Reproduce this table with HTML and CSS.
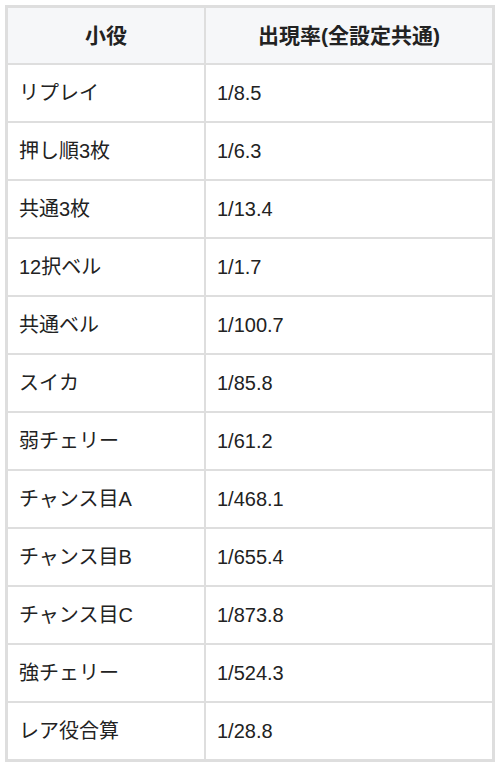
FILE: index.html
```html
<!DOCTYPE html>
<html lang="ja">
<head>
<meta charset="utf-8">
<link rel="stylesheet" href="styles.css">
</head>
<body>
<table class="rates">
  <thead>
    <tr><th class="col-name">小役</th><th class="col-rate">出現率(全設定共通)</th></tr>
  </thead>
  <tbody>
    <tr><td>リプレイ</td><td>1/8.5</td></tr>
    <tr><td>押し順3枚</td><td>1/6.3</td></tr>
    <tr><td>共通3枚</td><td>1/13.4</td></tr>
    <tr><td>12択ベル</td><td>1/1.7</td></tr>
    <tr><td>共通ベル</td><td>1/100.7</td></tr>
    <tr><td>スイカ</td><td>1/85.8</td></tr>
    <tr><td>弱チェリー</td><td>1/61.2</td></tr>
    <tr><td>チャンス目A</td><td>1/468.1</td></tr>
    <tr><td>チャンス目B</td><td>1/655.4</td></tr>
    <tr><td>チャンス目C</td><td>1/873.8</td></tr>
    <tr><td>強チェリー</td><td>1/524.3</td></tr>
    <tr><td>レア役合算</td><td>1/28.8</td></tr>
  </tbody>
</table>
</body>
</html>
```
FILE: styles.css
```css
html, body {
  margin: 0;
  padding: 0;
  background: #ffffff;
}
body {
  padding: 5px 0 0 5px;
  font-family: "Liberation Sans", "Noto Sans CJK JP", sans-serif;
  color: #222222;
}
.rates {
  width: 490px;
  border-collapse: collapse;
  border: 3px solid #dedede;
  table-layout: fixed;
}
.rates th, .rates td {
  border: 2px solid #dedede;
  height: 56px;
  padding: 0 11px;
  font-size: 20px;
  line-height: 24px;
  vertical-align: middle;
}
.rates th {
  background: #f6f7f9;
  font-weight: bold;
  text-align: center;
  font-size: 21px;
  height: 55px;
}
.rates td {
  text-align: left;
}
.col-name {
  width: 174px;
}
```
